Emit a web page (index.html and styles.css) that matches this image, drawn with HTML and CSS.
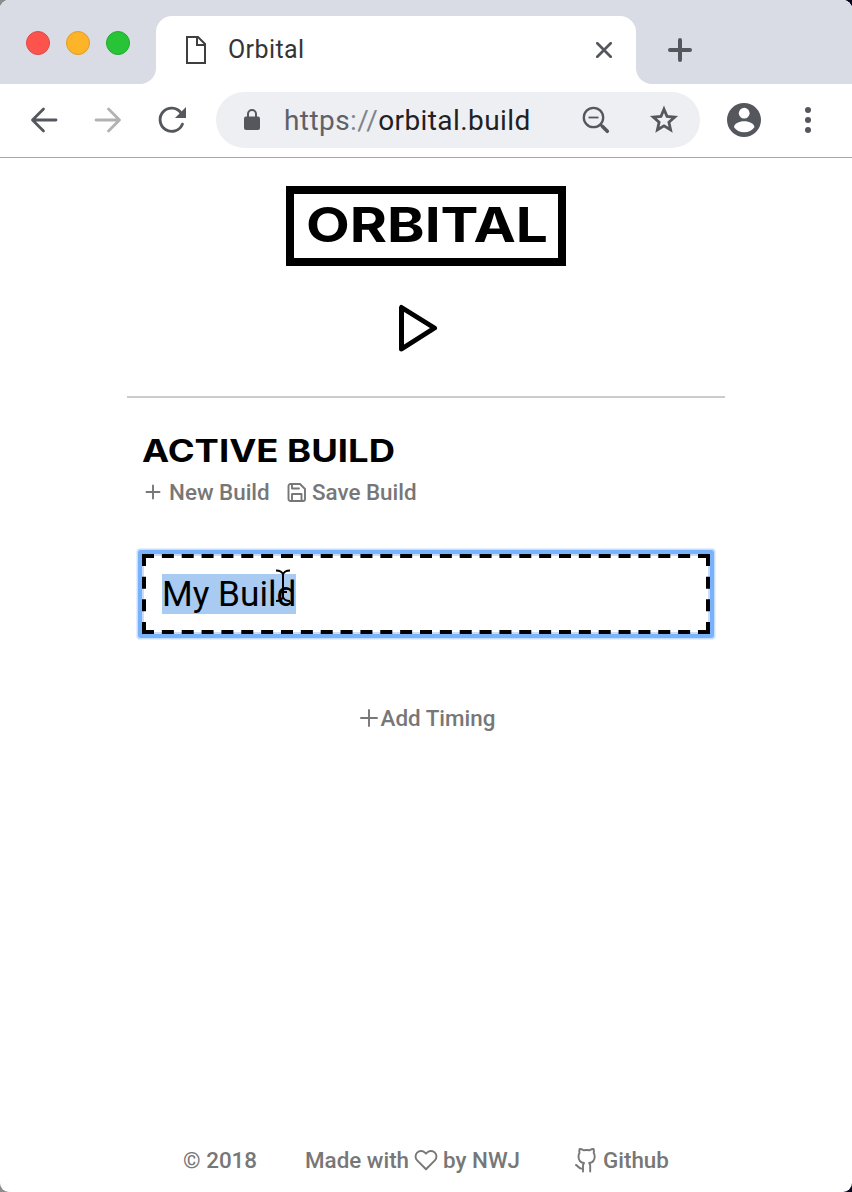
FILE: index.html
```html
<!DOCTYPE html>
<html lang="en">
<head>
<meta charset="utf-8">
<title>Orbital</title>
<link rel="stylesheet" href="styles.css">
</head>
<body>
<div class="window">
  <header class="tabbar">
    <div class="lights"><i class="red"></i><i class="amber"></i><i class="green"></i></div>
    <div class="tab">
      <svg class="doc" width="20" height="28" viewBox="0 0 20 28"><path d="M1 1h11l7 7v19H1zM11 1v8H19" fill="none" stroke="#3f3f42" stroke-width="2"/></svg>
      <span class="tab-title">Orbital</span>
      <svg class="close" width="16" height="16" viewBox="0 0 16 16"><path d="M1.300 1.300l13.400 13.400M14.700 1.300L1.300 14.700" stroke="#54575c" stroke-width="2.7" stroke-linecap="round"/></svg>
    </div>
    <svg class="newtab" width="24" height="24" viewBox="0 0 24 24"><path d="M12 2v20M2 12h20" stroke="#54575c" stroke-width="4" stroke-linecap="round"/></svg>
  </header>
  <nav class="toolbar">
    <svg class="back" width="28" height="28" viewBox="0 0 28 28"><path d="M26 14H3M13.500 3L2.500 14l11 11" fill="none" stroke="#54575c" stroke-width="2.8" stroke-linecap="round" stroke-linejoin="round"/></svg>
    <svg class="forward" width="28" height="28" viewBox="0 0 28 28"><path d="M2 14h23M14.500 3l11 11-11 11" fill="none" stroke="#b2b2b3" stroke-width="2.8" stroke-linecap="round" stroke-linejoin="round"/></svg>
    <svg class="reload" width="28" height="28" viewBox="0 0 28 28"><path d="M24.400 18.200A11.600 11.600 0 1 1 23 6.800" fill="none" stroke="#54575c" stroke-width="2.9" stroke-linecap="round"/><path d="M28 1v11H17z" fill="#54575c"/></svg>
    <div class="omnibox">
      <svg class="lock" width="16" height="22" viewBox="0 0 16 22"><rect y="7.500" width="16" height="13.500" rx="2" fill="#54575c"/><path d="M4 8V5a4 4 0 0 1 8 0v3" fill="none" stroke="#54575c" stroke-width="2"/></svg>
      <span class="url"><span class="scheme">https</span><span class="slashes">://</span>orbital.build</span>
      <svg class="zoomout" width="28" height="28" viewBox="0 0 28 28"><g fill="none" stroke="#54575c"><circle cx="11.500" cy="11.500" r="9.700" stroke-width="2.3"/><path d="M6.500 11.500h10" stroke-width="1.8"/><path d="M18.500 18.500l1.500 1.500" stroke-width="2.4"/><path d="M20.300 20.300l5 5" stroke-width="3.6" stroke-linecap="round"/></g></svg>
      <svg class="star" width="30" height="30" viewBox="0 0 30 30"><path d="M15 4.200l3 7.200 7.700.7-5.800 5.100 1.700 7.600-6.600-4-6.600 4 1.700-7.600-5.800-5.100 7.700-.7z" fill="none" stroke="#54575c" stroke-width="2.8"/></svg>
    </div>
    <svg class="avatar" width="34" height="34" viewBox="0 0 34 34"><circle cx="17" cy="17" r="17" fill="#54575c"/><circle cx="17.200" cy="10.200" r="5.400" fill="#fff"/><path d="M7 24.300c0-3.500 5-6 10.200-6s10.200 2.500 10.200 6c-2 3-6 5-10.200 5S9 27.300 7 24.300z" fill="#fff"/></svg>
    <svg class="more" width="6" height="26" viewBox="0 0 6 26"><g fill="#54575c"><circle cx="3" cy="3" r="3"/><circle cx="3" cy="13" r="3"/><circle cx="3" cy="23" r="3"/></g></svg>
  </nav>
  <main>
    <h1 class="logo"><svg width="264" height="64" viewBox="0 0 264 64"><text x="12" y="48" textLength="242" lengthAdjust="spacingAndGlyphs">ORBITAL</text></svg></h1>
    <svg class="play" width="40" height="48" viewBox="0 0 40 48"><path d="M3.500 3.500v41.500L36.500 24z" fill="none" stroke="#000" stroke-width="5" stroke-linejoin="round"/></svg>
    <section class="build">
      <h2><svg width="300" height="40" viewBox="0 0 300 40"><text x="0" y="29" textLength="253" lengthAdjust="spacingAndGlyphs">ACTIVE BUILD</text></svg></h2>
      <div class="actions">
        <svg class="plus" width="16" height="16" viewBox="0 0 16 16"><path d="M8 1.500v13M1.500 8h13"/></svg><span class="new">New Build</span>
        <svg class="save" width="20" height="20" viewBox="0 0 20 20"><path d="M1.500 4a2 2 0 0 1 2-2h9.500l5 5v10a2 2 0 0 1-2 2H3.500a2 2 0 0 1-2-2zM5 19v-7h9.500v7M5 2v4.500h7"/></svg><span class="savelabel">Save Build</span>
      </div>
      <div class="field">
        <svg class="dashes" width="568" height="80" viewBox="0 0 568 80"><path d="M0 2h568M0 78h568" stroke-dasharray="12 7.857"/><path d="M2 0v80M566 0v80" stroke-dasharray="12 10.667"/></svg>
        <span class="value">My Build</span>
        <svg class="ibeam" width="18" height="34" viewBox="0 0 18 34"><path d="M2 1.500c4 0 6 1 7 4 1-3 3-4 7-4M9 5v24M5 23h8M2 32c4 0 6-1 7-4 1 3 3 4 7 4"/></svg>
      </div>
    </section>
    <div class="timing"><svg class="plus" width="18" height="18" viewBox="0 0 18 18"><path d="M9 1v16M1 9h16"/></svg><span>Add Timing</span></div>
  </main>
  <footer>
    <span class="year">© 2018</span>
    <span class="made">Made with</span>
    <svg class="heart" width="24" height="24" viewBox="0 0 24 24"><path d="M20.840 4.610a5.500 5.500 0 0 0-7.780 0L12 5.670l-1.060-1.060a5.500 5.500 0 0 0-7.780 7.780L12 21.230l8.840-8.840a5.500 5.500 0 0 0 0-7.780z"/></svg>
    <span class="by">by NWJ</span>
    <svg class="github" width="24" height="28" viewBox="0 0 24 28"><path d="M9 25.500v-6c0-1 .3-1.700 1-2.500-3.500-.5-5.500-3-5.500-6.500 0-1.500.3-2.500 1-3.500-.4-1.600-.3-3 .1-4 1.600 0 2.800.5 4 1.300 2-.4 4-.4 6 0 1.200-.8 2.400-1.300 4-1.300.4 1 .5 2.400.1 4 .7 1 1 2 1 3.500 0 3.500-2 6-5.500 6.500.7.800 1 1.500 1 2.500v6M9 22.500c-4 1-4.500-2.500-7-3.500"/></svg>
    <span class="gh">Github</span>
  </footer>
</div>
</body>
</html>
```
FILE: styles.css
```css
* { box-sizing: border-box; }
body { margin: 0; background: linear-gradient(90deg, #8c8c8c 50%, #07061c 50%); font-family: Roboto, "Liberation Sans", sans-serif; }
svg { display: block; flex: none; }
span { white-space: pre; }
.window { width: 852px; height: 1192px; background: #fff; border-radius: 9px; overflow: hidden; display: flex; flex-direction: column; }
.tabbar { height: 84px; background: linear-gradient(#d9dce4, #d9dce4) 0 0 / 100% 60px no-repeat, #fff; display: flex; flex: none; position: relative; }
.tabbar::after { content: ""; position: absolute; left: 636px; right: 0; top: 16px; bottom: 0; background: #d9dce4; border-bottom-left-radius: 16px; }
.lights { width: 156px; padding: 31px 0 0 26px; display: flex; gap: 16px; background: #d9dce4; border-bottom-right-radius: 16px; }
.lights i { width: 24px; height: 24px; border-radius: 50%; border: 1px solid; }
.lights .red { background: #fc544d; border-color: #dc4944; }
.lights .amber { background: #fdb429; border-color: #df9d2b; }
.lights .green { background: #27c437; border-color: #20aa2f; }
.tab { width: 480px; height: 68px; margin-top: 16px; background: #fff; border-radius: 16px 16px 0 0; display: flex; align-items: center; padding: 0 24px 0 30px; }
.tab-title { font-size: 25px; letter-spacing: .4px; line-height: 30px; padding-bottom: 1px; color: #333438; margin-left: 22px; flex: 1; }
.newtab { position: relative; z-index: 1; margin: 38px 0 0 32px; }
.toolbar { height: 74px; flex: none; border-bottom: 1px solid #a7a8aa; display: flex; align-items: center; padding: 0 0 1px 30px; }
.forward { margin-left: 36px; }
.reload { margin-left: 36px; }
.omnibox { margin-left: 30px; width: 484px; height: 56px; border-radius: 28px; background: #eeeff3; display: flex; align-items: center; padding-left: 28px; }
.url { width: 298px; margin-left: 24px; font-size: 28px; letter-spacing: .42px; color: #202124; }
.scheme { color: #5f6167; }
.slashes { color: #80838a; }
.star { margin-left: 39px; }
.avatar { margin-left: 27px; }
.more { margin-left: 44px; }
main { flex: 1; display: flex; flex-direction: column; align-items: center; padding-top: 28px; }
h1, h2 { margin: 0; }
.logo { border: 8px solid #000; width: 280px; height: 80px; }
.logo text { font: 700 48px Inter, sans-serif; }
.play { margin: 38px 17px 0 0; }
.build { width: 598px; margin-top: 44px; border-top: 2px solid #ccc; padding: 35px 15px 0; }
.build h2 text { font: 700 31px Inter, sans-serif; }
.actions { display: flex; align-items: center; height: 36px; font-size: 22.4px; font-weight: 500; color: #777; margin-top: 1px; }
.plus, .save, .heart, .github { fill: none; stroke: #777; stroke-width: 1.9; stroke-linejoin: round; stroke-linecap: round; }
.actions .plus { margin-left: 3px; }
.new { margin-left: 8px; width: 118px; }
.savelabel { margin-left: 5px; }
.field { position: relative; width: 568px; height: 80px; margin-top: 44px; padding: 20px; box-shadow: 0 0 0 4px #7ab1fb, 0 0 0 5.500px #c6dffd; border-radius: 1px; }
.dashes { position: absolute; inset: 0; fill: none; stroke: #000; stroke-width: 4; background: #e4effe; clip-path: none; }
.dashes { background: linear-gradient(#fff, #fff) 2px 2px / 564px 76px no-repeat, #c6dffd; }
.value { position: relative; display: inline-block; height: 40px; line-height: 40px; background: #a9cbf1; font-size: 35.200px; }
.ibeam { position: absolute; left: 132px; top: 15px; fill: none; stroke: #000; stroke-width: 2; }
.timing { display: flex; align-items: center; margin-top: 66px; height: 36px; font-size: 22.4px; font-weight: 500; color: #777; gap: 3px; padding-left: 3px; }
footer { height: 64px; flex: none; display: flex; align-items: center; padding-left: 183px; color: #777; font-size: 22.4px; font-weight: 500; }
.year { width: 122px; }
.made { width: 109px; }
.by { width: 131px; margin-left: 5px; }
.gh { margin-left: 5px; }
```
